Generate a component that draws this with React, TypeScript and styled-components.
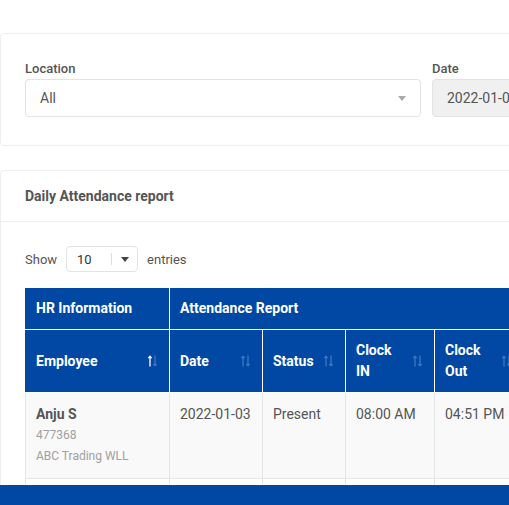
import React from "react";
import styled, { createGlobalStyle } from "styled-components";

const Global = createGlobalStyle`
  html, body { margin: 0; padding: 0; background: #fff; overflow: hidden; }
  body { font-family: Roboto, "Liberation Sans", Arial, sans-serif; color: #555; }
  * { box-sizing: border-box; }
`;

const Page = styled.div`
  width: 900px;
  padding-top: 33px;
  display: flex;
  flex-direction: column;
  gap: 24px;
`;

const Card = styled.div`
  background: #fff;
  border: 1px solid #eee;
  border-radius: 4px;
`;

const FilterBody = styled.div`
  padding: 27px 24px 28px;
  display: grid;
  grid-template-columns: 396px 396px;
  column-gap: 11px;
`;

const Field = styled.div`
  display: flex;
  flex-direction: column;
  gap: 3px;
`;

const Label = styled.label`
  font-size: 13px;
  font-weight: 500;
  color: #555;
  line-height: 15px;
`;

const SelectBox = styled.div<{ $disabled?: boolean }>`
  height: 38px;
  border: 1px solid #e3e3e3;
  border-radius: 4px;
  background: ${(p) => (p.$disabled ? "#f0f0f0" : "#fff")};
  display: flex;
  align-items: center;
  padding: 0 14px;
  font-size: 14px;
  color: #555;
  justify-content: space-between;
`;

const Caret = styled.span<{ $color?: string }>`
  width: 0;
  height: 0;
  border-left: 4.5px solid transparent;
  border-right: 4.5px solid transparent;
  border-top: 5px solid ${(p) => p.$color || "#aaa"};
`;

const CardHeader = styled.div`
  height: 51px;
  border-bottom: 1px solid #eee;
  display: flex;
  align-items: center;
  padding: 0 24px;
  font-size: 14px;
  font-weight: 700;
  color: #555;
`;

const CardBody = styled.div`
  padding: 24px 24px 0;
`;

const LengthRow = styled.div`
  display: flex;
  align-items: center;
  gap: 9px;
  font-size: 13px;
  color: #555;
  height: 26px;
  margin-bottom: 16px;
`;

const LengthSelect = styled.div`
  width: 72px;
  height: 26px;
  border: 1px solid #e3e3e3;
  border-radius: 4px;
  display: flex;
  align-items: center;
  padding: 0 0 0 10px;
  font-size: 13px;
  color: #333;
`;

const LengthValue = styled.span`
  flex: 1;
`;

const LengthDivider = styled.span`
  width: 1px;
  height: 12px;
  background: #ddd;
`;

const LengthCaret = styled.span`
  width: 25px;
  display: flex;
  justify-content: center;
`;

const Table = styled.table`
  border-collapse: collapse;
  table-layout: fixed;
  width: 700px;
  font-size: 14px;
`;

const Th = styled.th`
  background: #0048a3;
  color: #fff;
  font-weight: 700;
  text-align: left;
  padding: 10px 12px 10px 10px;
  line-height: 21px;
  border: 1px solid #fff;
  border-top: 0;
  vertical-align: middle;
  &:first-child { border-left: 1px solid #0048a3; }
`;

const ThInner = styled.div`
  display: flex;
  align-items: center;
  justify-content: space-between;
  gap: 8px;
`;

const ThText = styled.span`
  flex: 1;
  min-width: 0;
`;

const SortSvg = styled.svg`
  flex-shrink: 0;
  display: block;
`;

const Tr = styled.tr<{ $striped?: boolean }>`
  background: ${(p) => (p.$striped ? "#f9f9f9" : "#fff")};
`;

const Td = styled.td`
  border: 1px solid #e6e6e6;
  padding: 11px 10px 11px 10px;
  vertical-align: top;
  line-height: 21px;
  color: #555;
`;

const Name = styled.div`
  font-weight: 700;
  color: #555;
`;

const Sub = styled.div`
  font-size: 12px;
  color: #a0a0a0;
`;

const Footer = styled.div`
  position: fixed;
  left: 0;
  right: 0;
  bottom: 0;
  height: 20px;
  background: #0048a3;
`;

const DIM = "#3b78c2";

const Sort = ({ active }: { active?: boolean }) => (
  <SortSvg width="9" height="12" viewBox="0 0 9 12" fill="none" strokeWidth="1.3">
    <path d="M2 11.5V1.2M0.3 3.2L2 1.2L3.7 3.2" stroke={active ? "#fff" : DIM} />
    <path d="M7 0.5V10.8M5.3 8.8L7 10.8L8.7 8.8" stroke={DIM} />
  </SortSvg>
);

const cols = [
  { label: "Employee", w: 144, active: true },
  { label: "Date", w: 93 },
  { label: "Status", w: 83 },
  { label: "Clock IN", w: 89 },
  { label: "Clock Out", w: 89 },
  { label: "Hours", w: 100 },
  { label: "Remarks", w: 102 },
];

export default function App() {
  return (
    <>
      <Global />
      <Page>
        <Card>
          <FilterBody>
            <Field>
              <Label>Location</Label>
              <SelectBox>
                <span>All</span>
                <Caret />
              </SelectBox>
            </Field>
            <Field>
              <Label>Date</Label>
              <SelectBox $disabled>
                <span>2022-01-03</span>
              </SelectBox>
            </Field>
          </FilterBody>
        </Card>
        <Card>
          <CardHeader>Daily Attendance report</CardHeader>
          <CardBody>
            <LengthRow>
              <span>Show</span>
              <LengthSelect>
                <LengthValue>10</LengthValue>
                <LengthDivider />
                <LengthCaret>
                  <Caret $color="#444" />
                </LengthCaret>
              </LengthSelect>
              <span>entries</span>
            </LengthRow>
            <Table>
              <colgroup>
                {cols.map((c) => (
                  <col key={c.label} style={{ width: c.w }} />
                ))}
              </colgroup>
              <thead>
                <tr>
                  <Th>HR Information</Th>
                  <Th colSpan={6}>Attendance Report</Th>
                </tr>
                <tr>
                  {cols.map((c) => (
                    <Th key={c.label}>
                      <ThInner>
                        <ThText>{c.label}</ThText>
                        <Sort active={c.active} />
                      </ThInner>
                    </Th>
                  ))}
                </tr>
              </thead>
              <tbody>
                <Tr $striped>
                  <Td>
                    <Name>Anju S</Name>
                    <Sub>477368</Sub>
                    <Sub>ABC Trading WLL</Sub>
                  </Td>
                  <Td>2022-01-03</Td>
                  <Td>Present</Td>
                  <Td>08:00 AM</Td>
                  <Td>04:51 PM</Td>
                  <Td>08:51</Td>
                  <Td></Td>
                </Tr>
                <Tr>
                  <Td>
                    <Name>Basil K</Name>
                    <Sub>477369</Sub>
                    <Sub>ABC Trading WLL</Sub>
                  </Td>
                  <Td>2022-01-03</Td>
                  <Td>Present</Td>
                  <Td>08:02 AM</Td>
                  <Td>05:00 PM</Td>
                  <Td>08:58</Td>
                  <Td></Td>
                </Tr>
              </tbody>
            </Table>
          </CardBody>
        </Card>
      </Page>
      <Footer />
    </>
  );
}
